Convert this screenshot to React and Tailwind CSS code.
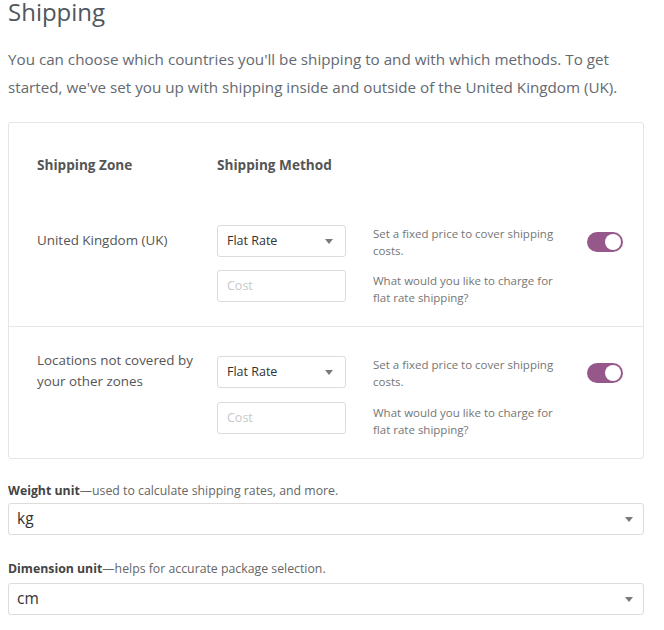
import React from "react";

function Arrow() {
  return (
    <svg width="8" height="5" viewBox="0 0 8 5" className="shrink-0">
      <path d="M0 0 L8 0 L4 5 Z" fill="#7a7a7a" />
    </svg>
  );
}

function Toggle() {
  return (
    <div className="w-[36px] h-[20px] rounded-full bg-[#96588a] flex items-center justify-end pr-[2px]">
      <div className="w-[16px] h-[16px] rounded-full bg-white" />
    </div>
  );
}

function Row({ zone, zoneClass, border, gap }) {
  return (
    <div
      className={
        "flex pl-[28px] pb-[20px] " +
        (border ? "border-t border-[#e8e8e8] pt-[29px]" : "pt-[30px]")
      }
    >
      <div className={"w-[180px] text-[13.4px] leading-[21px] text-[#555] pr-4 " + zoneClass}>
        {zone}
      </div>
      <div className={"w-[129px] flex flex-col " + gap}>
        <div className="h-[32px] border border-[#dcdcdc] rounded-[3px] flex items-center justify-between pl-[9px] pr-[12px] text-[12.5px] text-[#333]">
          <span>Flat Rate</span>
          <Arrow />
        </div>
        <div className="h-[32px] border border-[#dcdcdc] rounded-[3px] flex items-center pl-[9px] text-[12.5px] text-[#c8c8c8]">
          Cost
        </div>
      </div>
      <div className={"ml-[27px] w-[190px] flex flex-col text-[11.5px] leading-[17px] text-[#757575] " + gap}>
        <div>Set a fixed price to cover shipping costs.</div>
        <div>What would you like to charge for flat rate shipping?</div>
      </div>
      <div className="ml-[24px] mt-[7px]">
        <Toggle />
      </div>
    </div>
  );
}

function BigSelect({ value }) {
  return (
    <div className="h-[32px] border border-[#dcdcdc] rounded-[3px] flex items-center justify-between pl-[8px] pr-[10px] text-[15.5px] text-[#333]">
      <span>{value}</span>
      <Arrow />
    </div>
  );
}

export default function App() {
  return (
    <div
      className="w-[664px] h-[630px] bg-white overflow-hidden"
      style={{ fontFamily: '"Open Sans", "Noto Sans", sans-serif' }}
    >
      <div className="px-[8px] pt-0 w-[652px]">
        <h1 className="text-[24px] leading-[26px] font-medium text-[#50575e] -mt-[1px]">Shipping</h1>
        <p className="mt-[20px] text-[15.2px] leading-[28px] text-[#646970]">
          You can choose which countries you'll be shipping to and with which methods. To get started, we've set you up with shipping inside and outside of the United Kingdom (UK).
        </p>
        <div className="mt-[21px] w-[636px] border border-[#e5e5e5] rounded-[3px]">
          <div className="flex pl-[28px] pt-[32px] pb-[20px] text-[13.6px] leading-[20px] font-bold text-[#555]">
            <div className="w-[180px]">Shipping Zone</div>
            <div>Shipping Method</div>
          </div>
          <Row zone="United Kingdom (UK)" zoneClass="mt-[5px]" gap="gap-[13px]" />
          <Row zone="Locations not covered by your other zones" zoneClass="-mt-[6px]" gap="gap-[14px]" border />
        </div>
        <div className="mt-[22px] text-[12.3px] leading-[20px] text-[#666]">
          <span className="font-bold text-[#444]">Weight unit</span>—used to calculate shipping rates, and more.
        </div>
        <div className="mt-[2px]">
          <BigSelect value="kg" />
        </div>
        <div className="mt-[24px] text-[12.3px] leading-[20px] text-[#666]">
          <span className="font-bold text-[#444]">Dimension unit</span>—helps for accurate package selection.
        </div>
        <div className="mt-[4px]">
          <BigSelect value="cm" />
        </div>
      </div>
    </div>
  );
}
